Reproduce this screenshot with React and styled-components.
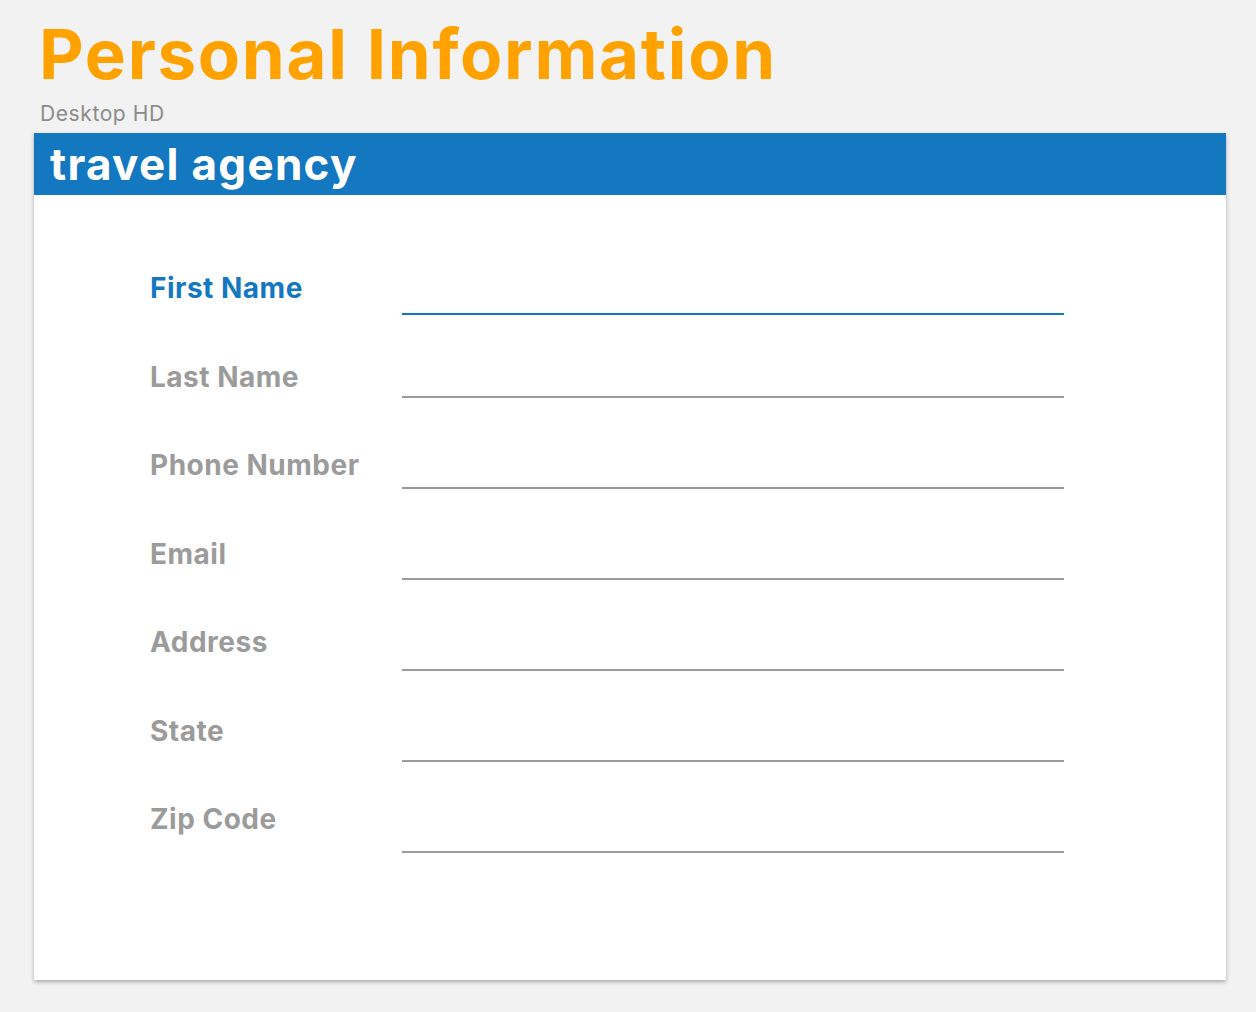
import React from "react";
import styled, { createGlobalStyle } from "styled-components";

const fields = [
  { label: "First Name", active: true },
  { label: "Last Name" },
  { label: "Phone Number" },
  { label: "Email" },
  { label: "Address" },
  { label: "State" },
  { label: "Zip Code" },
];

const App = () => {
  return (
    <Page>
      <GlobalStyle />
      <Title>Personal Information</Title>
      <Subtitle>Desktop HD</Subtitle>
      <Card>
        <Header>
          <Brand>travel agency</Brand>
        </Header>
        <Form>
          <Labels>
            {fields.map((f) => (
              <Label key={f.label} $active={f.active}>
                {f.label}
              </Label>
            ))}
          </Labels>
          <Inputs>
            {fields.map((f) => (
              <Input key={f.label} $active={f.active} />
            ))}
          </Inputs>
        </Form>
      </Card>
    </Page>
  );
};

export default App;

const GlobalStyle = createGlobalStyle`
  html, body {
    margin: 0;
    background: #f2f2f2;
  }
  body {
    font-family: Inter, "Noto Sans", sans-serif;
  }
`;

const Page = styled.div`
  width: 1256px;
  height: 1012px;
  box-sizing: border-box;
  padding: 14px 30px 0 34px;
  display: flex;
  flex-direction: column;
`;

const Title = styled.h1`
  margin: 0 0 0 5px;
  font-size: 69px;
  line-height: 80px;
  font-weight: 700;
  color: #ffa200;
  letter-spacing: 1.7px;
`;

const Subtitle = styled.div`
  margin: 8px 0 0 6px;
  font-size: 21px;
  line-height: 24px;
  color: #8b8b8b;
  letter-spacing: 0.6px;
`;

const Card = styled.div`
  margin-top: 7px;
  width: 1192px;
  height: 847px;
  background: #fff;
  box-shadow: 0 2px 4px rgba(0, 0, 0, 0.3);
  display: flex;
  flex-direction: column;
`;

const Header = styled.div`
  height: 62px;
  background: #1378c0;
  display: flex;
  align-items: center;
  padding-left: 16px;
`;

const Brand = styled.div`
  color: #fff;
  font-size: 44px;
  font-weight: 700;
  line-height: 62px;
  letter-spacing: 1.3px;
`;

const Form = styled.div`
  display: flex;
  padding: 76px 0 0 116px;
`;

const Labels = styled.div`
  width: 252px;
  display: flex;
  flex-direction: column;
  gap: 54.5px;
`;

const Label = styled.div`
  font-size: 28px;
  line-height: 34px;
  font-weight: 700;
  letter-spacing: 0.5px;
  color: ${(p) => (p.$active ? "#1378c0" : "#9b9b9b")};
`;

const Inputs = styled.div`
  width: 662px;
  display: flex;
  flex-direction: column;
  padding-top: 42px;
`;

const Input = styled.div`
  height: 2px;
  background: ${(p) => (p.$active ? "#1378c0" : "#9b9b9b")};
  & + & {
    margin-top: 81px;
  }
  & + & + & {
    margin-top: 89px;
  }
`;
